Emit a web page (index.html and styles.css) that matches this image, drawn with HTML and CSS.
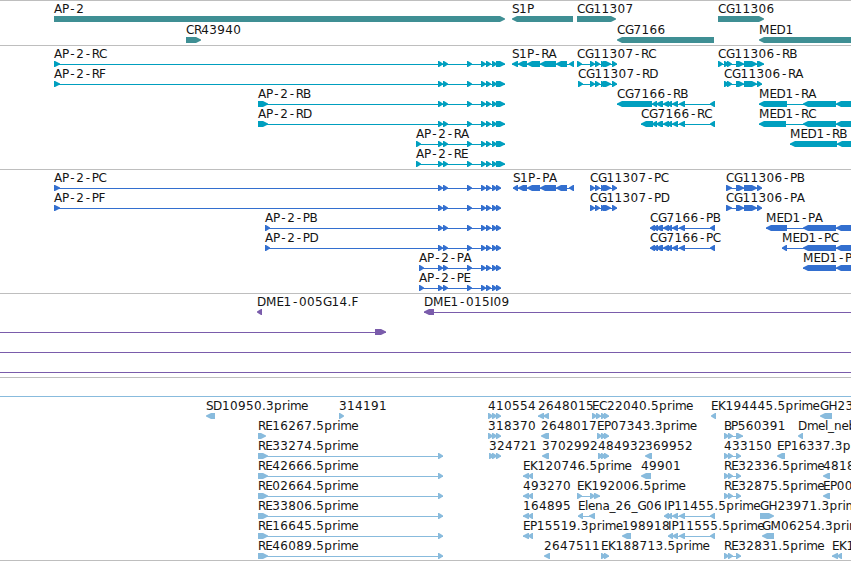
FILE: index.html
```html
<!DOCTYPE html>
<html lang="en">
<head>
  <meta charset="UTF-8" />
  <meta name="viewport" content="width=device-width, initial-scale=1.0" />
  <title>AP-2 region</title>
  <link rel="stylesheet" href="styles.css">
</head>
<body>

  <main class="browser">
    <section class="track genes" id="genes"></section>
    <section class="track transcripts" id="transcripts"></section>
    <section class="track proteins" id="proteins"></section>
    <section class="track bacs" id="bacs"></section>
    <section class="track ests" id="ests"></section>
  </main>

  <script src="tracks.js"></script>

</body>
</html>
```
FILE: styles.css
```css
body {
  margin: 0;
  background: #ffffff;
  font-family: 'DejaVu Sans', sans-serif;
  overflow: hidden;
}

.browser {
  display: flex;
  flex-direction: column;
  width: 851px;
  height: 561px;
  box-sizing: border-box;
  border-bottom: 1px solid #bebebe;
}

.track {
  display: flex;
  flex-direction: column;
  box-sizing: border-box;
  border-top: 1px solid #bebebe;
  overflow: hidden;
}

.row {
  display: block;
  flex: none;
  width: 851px;
  height: 20px;
  overflow: visible;
}

.row text {
  font-family: 'DejaVu Sans', sans-serif;
  font-size: 12px;
  fill: #141414;
}

.genes {
  height: 45px;
  fill: #3f8f94;
}

.genes .row {
  height: 21px;
}

.transcripts {
  height: 124px;
  fill: #009fbf;
}

.proteins {
  height: 124px;
  fill: #336fcf;
}

.bacs {
  height: 84px;
  fill: #7a5cab;
}

.ests {
  height: 183px;
  fill: #88bbdd;
}
```
FILE: tracks.js
```javascript
// feature: [label, strand, exons, intron line start, intron line end]
const ap2 = [[438, 443], [443, 448], [467, 472], [481, 486], [486, 491], [492, 497]];
const ap2R = ap2.concat([[496, 505]]);
const ap2P = ap2.concat([[496, 501]]);
const s1p = [[518, 527], [527, 540], [540, 556], [556, 567], [569, 574]];
const cg11307 = [[590, 595], [595, 600], [601, 606], [603, 611], [612, 617]];
const cg7166 = [[652, 657], [656, 663], [663, 669], [667, 672], [672, 678], [679, 685], [710, 715]];
const cg7166P = [[650, 655], [653, 658]].concat(cg7166.slice(1));
const cg11306 = [[736, 744], [744, 757]];
const med1 = [[803, 836], [836, 865]];
const re = [[258, 268], [438, 443]];
const trip = [[488, 493], [492, 497], [496, 501]];
const re32 = [[724, 729], [728, 733], [736, 741]];
const pair = [[523, 529], [528, 533]];

const tracks = {
  genes: [
    [['AP-2', '+', [[54, 505]]], ['S1P', '-', [[512, 573]]], ['CG11307', '+', [[577, 616]]], ['CG11306', '+', [[718, 764]]]],
    [['CR43940', '+', [[186, 201]]], ['CG7166', '-', [[617, 714]]], ['MED1', '-', [[759, 870]]]]
  ],
  transcripts: [
    [['AP-2-RC', '+', [[54, 60], ...ap2R]], ['S1P-RA', '-', [[512, 518], ...s1p]], ['CG11307-RC', '+', [[577, 582], ...cg11307]],
      ['CG11306-RB', '+', [[718, 723], [724, 729], [727, 732], ...cg11306, [757, 764]]]],
    [['AP-2-RF', '+', [[54, 60], ...ap2R]], ['CG11307-RD', '+', [[578, 583], ...cg11307]],
      ['CG11306-RA', '+', [[724, 729], [727, 732], ...cg11306, [757, 762]]]],
    [['AP-2-RB', '+', [[258, 268], ...ap2R]], ['CG7166-RB', '-', [[617, 652], ...cg7166]], ['MED1-RA', '-', [[759, 787], ...med1]]],
    [['AP-2-RD', '+', [[258, 268], ...ap2R]], ['CG7166-RC', '-', [[641, 653], ...cg7166]], ['MED1-RC', '-', [[759, 786], ...med1]]],
    [['AP-2-RA', '+', [[416, 421], ...ap2R]], ['MED1-RB', '-', [[790, 837], [837, 865]]]],
    [['AP-2-RE', '+', [[416, 421], ...ap2R]]]
  ],
  proteins: [
    [['AP-2-PC', '+', [[54, 60], ...ap2P]], ['S1P-PA', '-', [[513, 518], ...s1p]], ['CG11307-PC', '+', cg11307],
      ['CG11306-PB', '+', [[726, 732], ...cg11306, [757, 762]]]],
    [['AP-2-PF', '+', [[54, 60], ...ap2P]], ['CG11307-PD', '+', cg11307],
      ['CG11306-PA', '+', [[726, 732], ...cg11306, [757, 762]]]],
    [['AP-2-PB', '+', [[265, 270], ...ap2P]], ['CG7166-PB', '-', cg7166P], ['MED1-PA', '-', [[766, 787], ...med1]]],
    [['AP-2-PD', '+', [[265, 270], ...ap2P]], ['CG7166-PC', '-', cg7166P], ['MED1-PC', '-', [[782, 787], ...med1]]],
    [['AP-2-PA', '+', [[419, 424], ...ap2P]], ['MED1-P', '-', med1]],
    [['AP-2-PE', '+', [[419, 424], ...ap2P]]]
  ],
  bacs: [
    [['DME1-005G14.F', '-', [[257, 262]]], ['DME1-015I09', '-', [[424, 434]], 424, 851]],
    [['', '+', [[375, 386]], 0, 386]],
    [['', '+', [], 0, 851]],
    [['', '+', [], 0, 851]]
  ],
  ests: [
    [['', '+', [], 0, 851]],
    [['SD10950.3prime', '-', [[206, 215]]], ['314191', '+', [[339, 344]]], ['410554', '+', trip], ['2648015', '-', [[538, 544], [543, 549]]],
      ['EC22040.5prime', '+', [[592, 597], [596, 601], [601, 606], [604, 609]]], ['EK194445.5prime', '-', [[711, 716]]], ['GH23', '-', [[820, 832]]]],
    [['RE16267.5prime', '+', [[258, 266]]], ['318370', '+', trip], ['2648017', '-', [[541, 549]]],
      ['EP07343.3prime', '+', [[597, 602], [601, 606], [604, 609]]], ['BP560391', '+', [[724, 729], [728, 733], [736, 743]]], ['Dmel_neb', '-', [[798, 803]]]],
    [['RE33274.5prime', '+', re], ['324721', '+', [[489, 494], [492, 497], [496, 501]]], ['3702992', '-', [[542, 549]]],
      ['484932', '+', [[598, 603], [601, 606], [604, 609]]], ['369952', '-', [[645, 652]]], ['433150', '+', re32], ['EP16337.3prime', '-', [[777, 785]]]],
    [['RE42666.5prime', '+', re], ['EK120746.5prime', '-', pair], ['49901', '-', [[641, 651]]], ['RE32336.5prime', '+', re32], ['4818', '-', [[823, 830]]]],
    [['RE02664.5prime', '+', re], ['493270', '-', pair], ['EK192006.5prime', '+', [[577, 582], [590, 595], [594, 600]]], ['RE32875.5prime', '+', re32], ['EP00', '-', [[823, 830]]]],
    [['RE33806.5prime', '+', re], ['164895', '-', pair], ['Elena_26_G06', '-', [[578, 583], [589, 595]]],
      ['IP11455.5prime', '-', [[664, 669], [667, 672], [672, 678], [679, 685], [710, 715]]], ['GH23971.3prime', '+', [[760, 774]]]],
    [['RE16645.5prime', '+', re], ['EP15519.3prime', '-', pair], ['198918', '-', [[622, 631]]],
      ['IP11555.5prime', '-', [[668, 673], [672, 678], [679, 685], [710, 715]]], ['GM06254.3prime', '-', [[762, 774]]]],
    [['RE46089.5prime', '+', re], ['2647511', '-', [[544, 550]]], ['EK188713.5prime', '+', [[601, 606], [604, 609]]], ['RE32831.5prime', '+', re32], ['EK1', '-', [[832, 838], [837, 842]]]]
  ]
};

// label letter widths, digits are 8
const widths = {
  A: 8, B: 7, C: 8, D: 9, E: 7, F: 6, G: 8.5, H: 9, I: 3.5, K: 7.5, M: 10.5, P: 6.7, R: 7.3, S: 7,
  p: 8, r: 5, i: 3, m: 11, e: 7, l: 3, n: 7.5, a: 7, b: 8, _: 6, '-': 7.5, '.': 4
};

function label(name, x) {
  const xs = [];
  for (const ch of name) {
    // narrow dash sits in the middle of its cell
    xs.push(ch === '-' ? x + 1.5 : x);
    x += widths[ch] || 8;
  }
  return `<text x="${xs.join(' ')}" y="12">${name}</text>`;
}

function exon(s, e, strand) {
  const head = Math.min(e - s, 6) - 1;
  return strand === '+'
    ? `<polygon points="${s},15 ${e - head},15 ${e},17.5 ${e},18.5 ${e - head},21 ${s},21" />`
    : `<polygon points="${e},15 ${s + head},15 ${s},17.5 ${s},18.5 ${s + head},21 ${e},21" />`;
}

function feature([name, strand, exons, from, to]) {
  const start = from === undefined ? exons[0][0] : from;
  const end = to === undefined ? exons[exons.length - 1][1] : to;
  let out = '';
  if (exons.length !== 1 || from !== undefined) {
    out += `<rect x="${start}" y="18" width="${end - start}" height="1" />`;
  }
  exons.forEach(([s, e]) => out += exon(s, e, strand));
  if (name) out += label(name, start);
  return out;
}

Object.keys(tracks).forEach(id => {
  document.getElementById(id).innerHTML = tracks[id]
    .map(row => `<svg class="row">${row.map(feature).join('')}</svg>`)
    .join('');
});
```
